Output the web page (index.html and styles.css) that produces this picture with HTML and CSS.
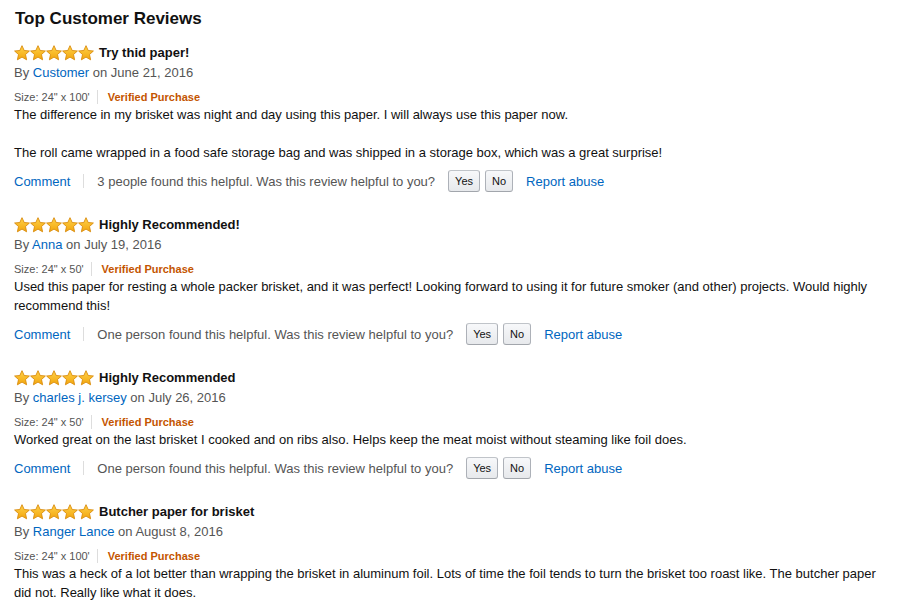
FILE: index.html
```html
<!DOCTYPE html>
<html>
<head>
<meta charset="utf-8">
<link rel="stylesheet" href="styles.css">
</head>
<body>
<svg width="0" height="0" class="defs">
  <defs>
    <linearGradient id="sg" x1="0" y1="0" x2="0" y2="1">
      <stop offset="0" stop-color="#ffd24a"/>
      <stop offset="1" stop-color="#f2a50c"/>
    </linearGradient>
    <symbol id="star" viewBox="0 0 16 16">
      <path d="M8 0.7 L10.2 5.5 L15.4 6 L11.5 9.5 L12.6 14.8 L8 12.1 L3.4 14.8 L4.5 9.5 L0.6 6 L5.8 5.5 Z" fill="url(#sg)" stroke="#d98b0b" stroke-width="0.9" stroke-linejoin="round"/>
    </symbol>
  </defs>
</svg>
<div class="reviews">
  <h2 class="heading">Top Customer Reviews</h2>

  <div class="review">
    <div class="title-row">
      <span class="stars"><svg class="star"><use href="#star"/></svg><svg class="star"><use href="#star"/></svg><svg class="star"><use href="#star"/></svg><svg class="star"><use href="#star"/></svg><svg class="star"><use href="#star"/></svg></span>
      <span class="title">Try thid paper!</span>
    </div>
    <div class="by">By <a class="link" href="#">Customer</a> on June 21, 2016</div>
    <div class="meta"><span class="size">Size: 24" x 100'</span><span class="sep"></span><span class="verified">Verified Purchase</span></div>
    <div class="body">The difference in my brisket was night and day using this paper. I will always use this paper now.<br><br>The roll came wrapped in a food safe storage bag and was shipped in a storage box, which was a great surprise!</div>
    <div class="actions">
      <a class="link" href="#">Comment</a><span class="sep2"></span><span class="helpful">3 people found this helpful. Was this review helpful to you?</span>
      <button class="btn">Yes</button><button class="btn">No</button>
      <a class="link report" href="#">Report abuse</a>
    </div>
  </div>

  <div class="review">
    <div class="title-row">
      <span class="stars"><svg class="star"><use href="#star"/></svg><svg class="star"><use href="#star"/></svg><svg class="star"><use href="#star"/></svg><svg class="star"><use href="#star"/></svg><svg class="star"><use href="#star"/></svg></span>
      <span class="title">Highly Recommended!</span>
    </div>
    <div class="by">By <a class="link" href="#">Anna</a> on July 19, 2016</div>
    <div class="meta"><span class="size">Size: 24" x 50'</span><span class="sep"></span><span class="verified">Verified Purchase</span></div>
    <div class="body">Used this paper for resting a whole packer brisket, and it was perfect! Looking forward to using it for future smoker (and other) projects. Would highly recommend this!</div>
    <div class="actions">
      <a class="link" href="#">Comment</a><span class="sep2"></span><span class="helpful">One person found this helpful. Was this review helpful to you?</span>
      <button class="btn">Yes</button><button class="btn">No</button>
      <a class="link report" href="#">Report abuse</a>
    </div>
  </div>

  <div class="review">
    <div class="title-row">
      <span class="stars"><svg class="star"><use href="#star"/></svg><svg class="star"><use href="#star"/></svg><svg class="star"><use href="#star"/></svg><svg class="star"><use href="#star"/></svg><svg class="star"><use href="#star"/></svg></span>
      <span class="title">Highly Recommended</span>
    </div>
    <div class="by">By <a class="link" href="#">charles j. kersey</a> on July 26, 2016</div>
    <div class="meta"><span class="size">Size: 24" x 50'</span><span class="sep"></span><span class="verified">Verified Purchase</span></div>
    <div class="body">Worked great on the last brisket I cooked and on ribs also. Helps keep the meat moist without steaming like foil does.</div>
    <div class="actions">
      <a class="link" href="#">Comment</a><span class="sep2"></span><span class="helpful">One person found this helpful. Was this review helpful to you?</span>
      <button class="btn">Yes</button><button class="btn">No</button>
      <a class="link report" href="#">Report abuse</a>
    </div>
  </div>

  <div class="review">
    <div class="title-row">
      <span class="stars"><svg class="star"><use href="#star"/></svg><svg class="star"><use href="#star"/></svg><svg class="star"><use href="#star"/></svg><svg class="star"><use href="#star"/></svg><svg class="star"><use href="#star"/></svg></span>
      <span class="title">Butcher paper for brisket</span>
    </div>
    <div class="by">By <a class="link" href="#">Ranger Lance</a> on August 8, 2016</div>
    <div class="meta"><span class="size">Size: 24" x 100'</span><span class="sep"></span><span class="verified">Verified Purchase</span></div>
    <div class="body">This was a heck of a lot better than wrapping the brisket in aluminum foil. Lots of time the foil tends to turn the brisket too roast like. The butcher paper did not. Really like what it does.</div>
  </div>
</div>
</body>
</html>
```

FILE: styles.css
```css
* { box-sizing: border-box; }
html, body { margin: 0; padding: 0; background: #fff; }
body {
  font-family: "Liberation Sans", Arial, sans-serif;
  color: #111;
  font-size: 13px;
  overflow: hidden;
}
.defs { position: absolute; width: 0; height: 0; }
.reviews { padding: 9px 14px 0 14px; }
.heading {
  margin: 0 0 14px 1px;
  font-size: 17px;
  line-height: 20px;
  font-weight: bold;
  color: #111;
}
.review { margin-bottom: 22px; }
.title-row {
  display: flex;
  align-items: center;
  height: 20px;
  gap: 5px;
}
.stars { display: flex; }
.star { width: 16px; height: 16px; display: block; }
.title { font-weight: bold; font-size: 13px; line-height: 20px; color: #111; }
.by { line-height: 20px; color: #555; }
.link { color: #0066c0; text-decoration: none; }
.meta {
  display: flex;
  align-items: center;
  margin-top: 6px;
  height: 16px;
  font-size: 11px;
}
.size { color: #555; }
.sep { width: 1px; height: 14px; background: #ddd; margin: 0 10px 0 7px; }
.verified { color: #c45500; font-weight: bold; }
.body { line-height: 19px; color: #111; }
.actions {
  display: flex;
  align-items: center;
  height: 24px;
  margin-top: 7px;
  color: #555;
}
.sep2 { width: 1px; height: 14px; background: #ddd; margin: 0 13px 0 13px; }
.helpful { margin-right: 13px; }
.btn {
  font-family: "Liberation Sans", Arial, sans-serif;
  font-size: 11px;
  color: #111;
  height: 22px;
  padding: 0 6px;
  margin: 0 5px 0 0;
  border: 1px solid #adb1b8;
  border-top-color: #c0c4c9;
  border-bottom-color: #a2a6ac;
  border-radius: 3px;
  background: linear-gradient(#f7f8fa, #e7e9ec);
}
.report { margin-left: 8px; }
```
